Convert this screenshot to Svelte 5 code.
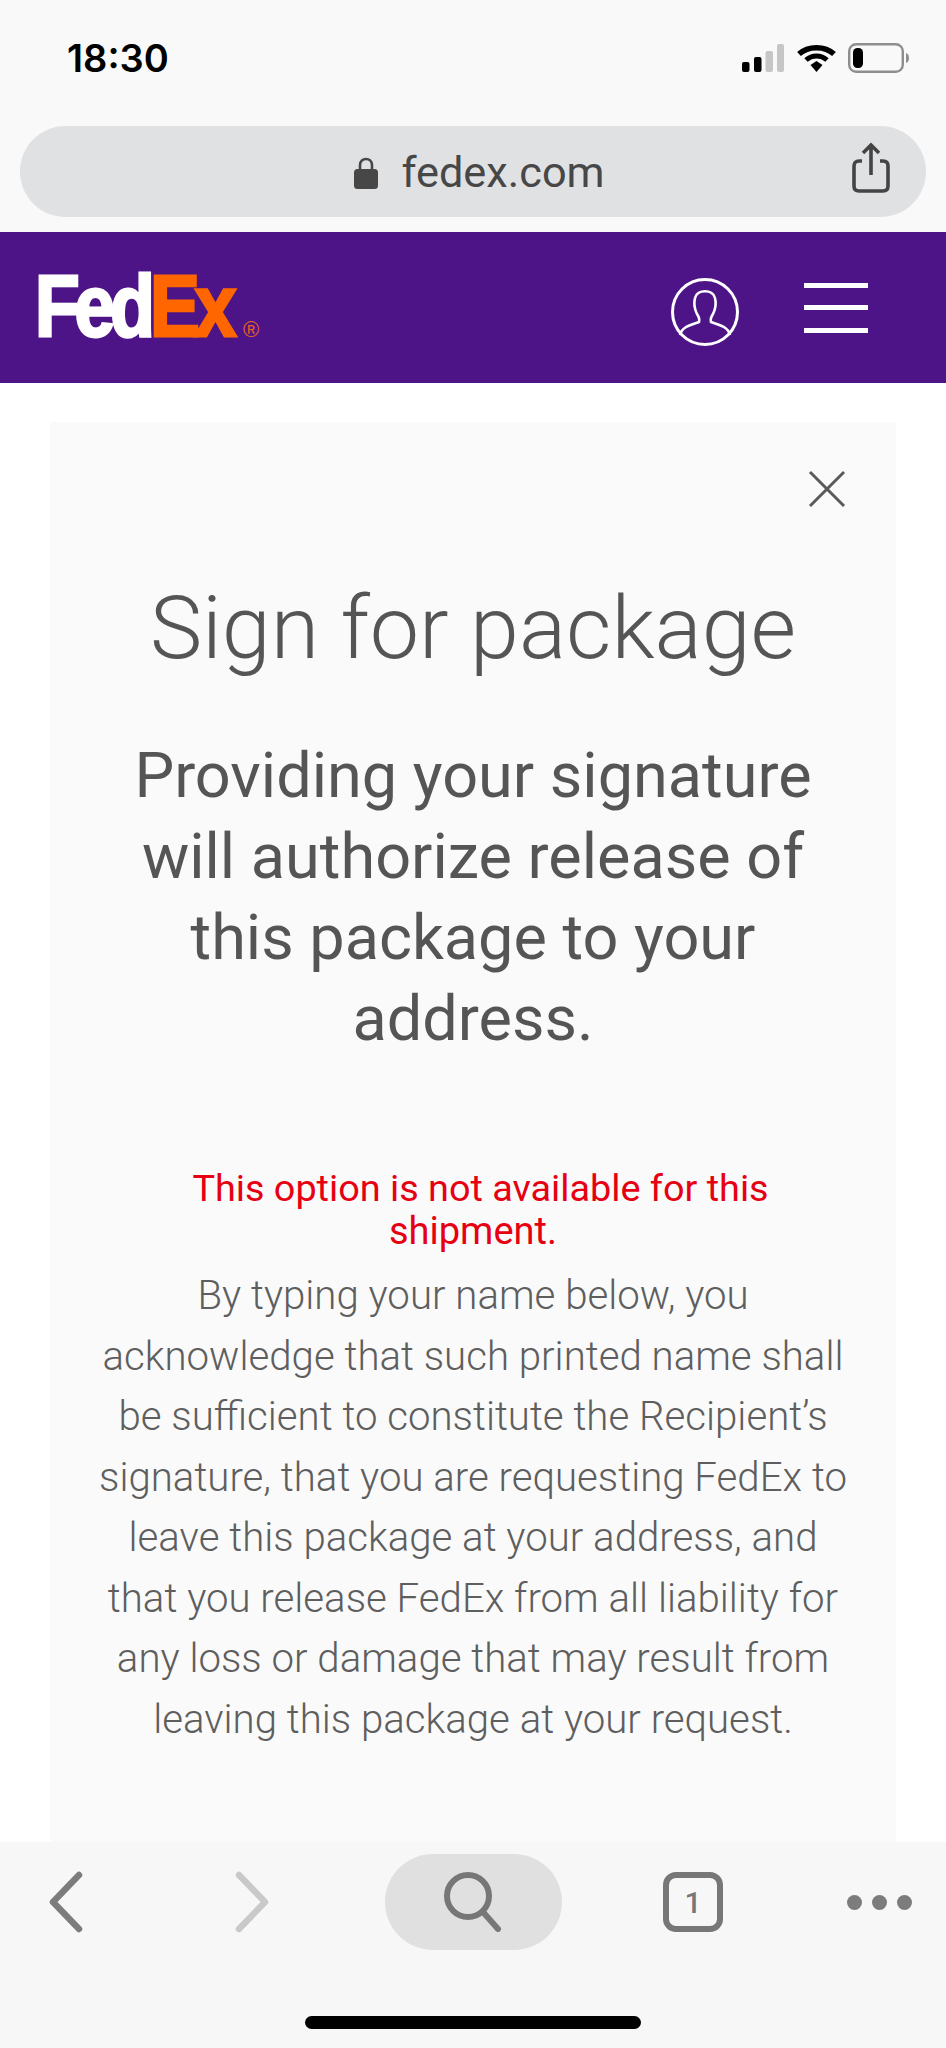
<script lang="ts">
  const body = [
    'By typing your name below, you',
    'acknowledge that such printed name shall',
    'be sufficient to constitute the Recipient’s',
    'signature, that you are requesting FedEx to',
    'leave this package at your address, and',
    'that you release FedEx from all liability for',
    'any loss or damage that may result from',
    'leaving this package at your request.',
  ];
</script>

<div class="phone">
  <header class="chrome">
    <div class="status">
      <span class="time">18:30</span>
      <div class="indicators">
        <svg width="42" height="28" viewBox="0 0 42 28">
          <rect x="0" y="18" width="7.5" height="10" rx="2" fill="#000" />
          <rect x="12" y="13" width="7.5" height="15" rx="2" fill="#000" />
          <rect x="23.5" y="7" width="7.5" height="21" rx="2" fill="#c6c6c6" />
          <rect x="35" y="0" width="7" height="28" rx="2" fill="#c6c6c6" />
        </svg>
        <svg width="39" height="28" viewBox="0 0 39 28">
          <path d="M2 10 C11 1.5 28 1.5 37 10" fill="none" stroke="#000" stroke-width="5.5" />
          <path d="M9 16 C15 10.5 24 10.5 30 16" fill="none" stroke="#000" stroke-width="5" />
          <path d="M13.5 21 L19.5 17 L25.5 21 L19.5 28 Z" fill="#000" />
        </svg>
        <svg width="62" height="30" viewBox="0 0 62 30">
          <rect x="1.2" y="1.2" width="53.6" height="27.6" rx="7" fill="none" stroke="#8e8e8e" stroke-width="2.4" />
          <rect x="5" y="5" width="10" height="20" rx="4.5" fill="#000" />
          <path d="M58 10 C62 11 62 19 58 20 Z" fill="#8e8e8e" />
        </svg>
      </div>
    </div>
    <div class="address">
      <div class="url">
        <svg width="26" height="34" viewBox="0 0 26 34">
          <path d="M7 14 V9 C7 1 19 1 19 9 V14" fill="none" stroke="#474747" stroke-width="2.6" />
          <rect x="1" y="13" width="24" height="20" rx="3.5" fill="#474747" />
        </svg>
        <span>fedex.com</span>
      </div>
      <svg class="share" width="40" height="52" viewBox="0 0 40 52">
        <path d="M11 19 H8 C4.5 19 3 21 3 24 V44 C3 47 4.5 49 8 49 H32 C35.5 49 37 47 37 44 V24 C37 21 35.5 19 32 19 H29" fill="none" stroke="#444" stroke-width="3.6" />
        <path d="M20 33 V3 M12 11 L20 3 L28 11" fill="none" stroke="#444" stroke-width="3.6" />
      </svg>
    </div>
  </header>

  <nav class="brand">
    <div class="logo" aria-label="FedEx">
      <span class="fed">Fed</span><span class="ex">Ex</span><span class="reg">®</span>
    </div>
    <div class="actions">
      <svg class="user" width="70" height="70" viewBox="0 0 70 70">
        <circle cx="35" cy="35" r="32.5" fill="none" stroke="#fff" stroke-width="3" />
        <path d="M10 58 C12 49 22 48 29 45 C30 42 29 40 27 37 C24 31 24 25 25 21 C27 12 43 12 45 21 C46 25 46 31 43 37 C41 40 40 42 41 45 C48 48 58 49 60 58" fill="none" stroke="#fff" stroke-width="2.6" />
      </svg>
      <div class="burger"><i></i><i></i><i></i></div>
    </div>
  </nav>

  <main>
    <section class="card">
      <svg class="close" width="38" height="38" viewBox="0 0 38 38">
        <path d="M2 2 L36 36 M36 2 L2 36" stroke="#5a5a5a" stroke-width="3" fill="none" />
      </svg>
      <h1>Sign for package</h1>
      <h2>Providing your signature<br />will authorize release of<br />this package to your<br />address.</h2>
      <p class="error"><span>This option is not available for this</span>shipment.</p>
      <p class="legal">
        {#each body as line}<span>{line}</span>{/each}
      </p>
    </section>
  </main>

  <footer class="toolbar">
    <div class="tools">
      <svg width="36" height="62" viewBox="0 0 36 62">
        <path d="M31 4 L5 31 L31 58" fill="none" stroke="#7c7c7c" stroke-width="6.5" stroke-linecap="round" stroke-linejoin="round" />
      </svg>
      <svg width="36" height="62" viewBox="0 0 36 62">
        <path d="M5 4 L31 31 L5 58" fill="none" stroke="#c9c9c9" stroke-width="6.5" stroke-linecap="round" stroke-linejoin="round" />
      </svg>
      <div class="search">
        <svg width="58" height="60" viewBox="0 0 58 60">
          <circle cx="24" cy="24" r="21" fill="none" stroke="#777" stroke-width="6" />
          <path d="M39 40 L54 57" stroke="#777" stroke-width="6" stroke-linecap="round" />
        </svg>
      </div>
      <div class="tabs">1</div>
      <div class="more"><i></i><i></i><i></i></div>
    </div>
    <div class="home"></div>
  </footer>
</div>

<style>
  :global(body) {
    background: #fff;
  }
  .phone {
    width: 946px;
    height: 2048px;
    display: flex;
    flex-direction: column;
    overflow: hidden;
    font-family: Roboto, "Liberation Sans", sans-serif;
    background: #fff;
  }
  .chrome {
    height: 232px;
    flex: none;
    box-sizing: border-box;
    padding: 0 20px;
    background: #f9f9fa;
  }
  .status {
    height: 126px;
    display: flex;
    justify-content: space-between;
    align-items: flex-start;
    padding: 37px 16px 0 47px;
    box-sizing: border-box;
  }
  .time {
    font-family: Inter, sans-serif;
    font-size: 38px;
    font-weight: 600;
    line-height: 42px;
    color: #000;
  }
  .indicators {
    display: flex;
    align-items: center;
    gap: 13px;
    margin-top: 6px;
  }
  .indicators svg:last-child {
    margin-left: -1px;
  }
  .address {
    position: relative;
    height: 91px;
    border-radius: 46px;
    background: #e0e1e3;
    display: flex;
    align-items: center;
    justify-content: center;
  }
  .url {
    display: flex;
    align-items: center;
    gap: 22px;
    color: #474747;
    font-size: 43.3px;
    font-family: Roboto, sans-serif;
    margin: 2px 0 0 12px;
  }
  .share {
    position: absolute;
    right: 35px;
    top: 16px;
  }
  .brand {
    height: 151px;
    flex: none;
    background: #4d1487;
    display: flex;
    align-items: center;
    justify-content: space-between;
    padding: 0 78px 0 35px;
    box-sizing: border-box;
  }
  .logo {
    display: flex;
    align-items: flex-start;
    height: 90px;
    font-family: "Liberation Sans", sans-serif;
    font-weight: 700;
    font-size: 87px;
    line-height: 90px;
    letter-spacing: -6px;
    margin-bottom: 4px;
  }
  .logo span {
    display: block;
    white-space: nowrap;
    transform-origin: 0 50%;
  }
  .fed {
    width: 137px;
    margin-right: -22px;
    color: #fff;
    -webkit-text-stroke: 3px #fff;
    transform: scaleX(0.84);
  }
  .ex {
    width: 94px;
    margin-right: -10px;
    color: #ff6600;
    -webkit-text-stroke: 3px #ff6600;
    transform: scaleX(0.86);
  }
  .logo .reg {
    margin: 54px 0 0 9px;
    font-size: 22px;
    line-height: 30px;
    letter-spacing: 0;
    font-weight: 400;
    color: #e8651c;
  }
  .actions {
    display: flex;
    align-items: center;
    gap: 64px;
  }
  .user {
    margin-top: 8px;
  }
  .burger {
    width: 64px;
    display: flex;
    flex-direction: column;
    gap: 17.5px;
  }
  .burger i {
    display: block;
    height: 5px;
    background: #fff;
  }
  main {
    flex: 1;
    min-height: 0;
    overflow: hidden;
    padding: 39px 50px 0;
  }
  .card {
    position: relative;
    height: 100%;
    background: #fafafa;
    display: flex;
    flex-direction: column;
    align-items: center;
    text-align: center;
    color: #555;
  }
  .close {
    position: absolute;
    right: 50px;
    top: 48px;
  }
  h1 {
    margin: 161px 0 0;
    font-size: 88px;
    line-height: 90px;
    font-weight: 300;
    color: #555;
  }
  h2 {
    margin: 62px 0 0;
    font-size: 63px;
    line-height: 81px;
    font-weight: 400;
    color: #555;
  }
  .error {
    margin: 108px 0 0;
    font-size: 38px;
    line-height: 43px;
    color: #e60012;
  }
  .error span {
    display: block;
    margin-left: 15px;
    font-size: 37.8px;
  }
  .legal {
    margin: 13px 0 0;
    font-size: 40.2px;
    line-height: 60.5px;
    font-weight: 300;
    color: #5e5e5e;
  }
  .legal span {
    display: block;
    white-space: nowrap;
  }
  .toolbar {
    height: 206px;
    flex: none;
    box-sizing: border-box;
    background: #f7f7f8;
    display: flex;
    flex-direction: column;
    align-items: center;
  }
  .tools {
    width: 100%;
    height: 120px;
    display: grid;
    grid-template-columns: 132px 240px 202px 238px 134px;
    align-items: center;
    justify-items: center;
  }
  .search {
    width: 177px;
    height: 96px;
    border-radius: 48px;
    background: #e0e0e0;
    display: flex;
    align-items: center;
    justify-content: center;
  }
  .tabs {
    width: 60px;
    height: 60px;
    box-sizing: border-box;
    border: 6px solid #777;
    border-radius: 13px;
    color: #777;
    font-size: 30px;
    font-weight: 500;
    display: flex;
    align-items: center;
    justify-content: center;
  }
  .more {
    display: flex;
    gap: 10px;
  }
  .more i {
    display: block;
    width: 15px;
    height: 15px;
    border-radius: 50%;
    background: #7c7c7c;
  }
  .home {
    width: 336px;
    height: 13px;
    margin-top: 54px;
    border-radius: 7px;
    background: #000;
  }
</style>
